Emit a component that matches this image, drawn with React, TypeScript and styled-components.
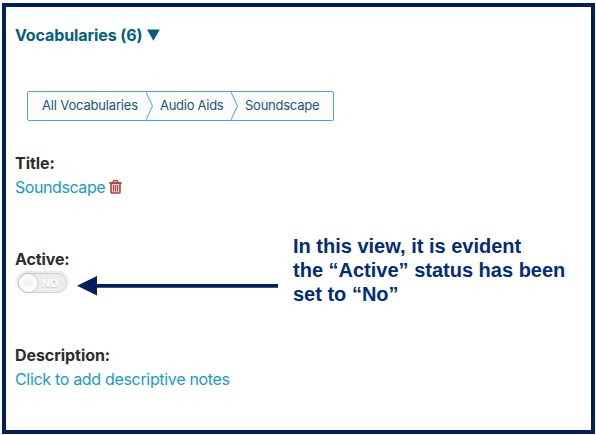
import React from "react";
import styled, { createGlobalStyle } from "styled-components";

const GlobalStyle = createGlobalStyle`
  *, *::before, *::after { box-sizing: border-box; }
  body { margin: 0; background: #fff; overflow: hidden; }
`;

const Page = styled.div`
  width: 596px;
  height: 435px;
  padding: 3px 1px 1px 2px;
  background: #fff;
  font: 16px/24px Inter, "Liberation Sans", sans-serif;
`;

const Frame = styled.main`
  position: relative;
  width: 593px;
  height: 431px;
  border: 4px solid #001f5b;
  padding: 16px 10px 0 9px;
`;

const SectionToggle = styled.h2`
  display: flex;
  align-items: center;
  gap: 4.5px;
  height: 24px;
  margin: 0 0 44px;
  color: #00607f;
  font-size: 16px;
  line-height: 24px;
  font-weight: 700;
  white-space: nowrap;
`;

const Fit = styled.span<{ $spacing: number }>`
  letter-spacing: ${(p) => p.$spacing}px;
  white-space: nowrap;
`;

const Trail = styled.nav`
  display: flex;
  width: 307px;
  height: 30px;
  margin: 0 0 30px 12px;
  border: 1px solid #48a7d3;
  border-radius: 2px;
  background: #fbfbfb;
`;

const Crumb = styled.a<{ $width: number; $spacing: number }>`
  width: ${(p) => p.$width}px;
  flex: none;
  padding-left: 14px;
  color: #1a5775;
  font-size: 13px;
  line-height: 27px;
  letter-spacing: ${(p) => p.$spacing}px;
  white-space: nowrap;
`;

const Chevron = styled.svg`
  flex: none;
  width: 8px;
  height: 28px;
  margin-right: -8px;
`;

const Field = styled.section`
  height: 96px;
`;

const Label = styled.div`
  height: 24px;
  color: #2d2d2d;
  font-weight: 700;
`;

const Value = styled.div`
  display: flex;
  align-items: center;
  gap: 4px;
  height: 24px;
  color: #189acb;
`;

const Switch = styled.button`
  display: flex;
  align-items: center;
  width: 55px;
  height: 24px;
  margin: 0;
  padding: 3px;
  border: 0;
  border-radius: 12px;
  background: linear-gradient(#ebebeb, #fff);
`;

const Track = styled.span`
  display: flex;
  align-items: center;
  width: 49px;
  height: 20px;
  flex: none;
  border: 1px solid #cecece;
  border-radius: 10px;
  background: #ededed;
  color: #fff;
  font: 700 11px/18px "Liberation Sans", sans-serif;
  letter-spacing: -0.2px;
  text-shadow: 0 1px 1px rgba(0, 0, 0, 0.16);
`;

const Knob = styled.span`
  width: 18px;
  height: 18px;
  margin: 0 5px 0 0;
  flex: none;
  border-radius: 50%;
  background: radial-gradient(circle, #f3f3f3 0 4px, #fff 6px);
  box-shadow: 0 0 3px rgba(0, 0, 0, 0.25);
`;

const Callout = styled.aside`
  position: absolute;
  left: 71px;
  top: 227px;
  display: flex;
  align-items: flex-start;
`;

const Arrow = styled.svg`
  width: 202px;
  height: 20px;
  margin-top: 42px;
  flex: none;
`;

const Note = styled.p`
  margin: 0 0 0 14px;
  color: #002d7a;
  font: 700 20px/24px "Liberation Sans", sans-serif;
  white-space: nowrap;
`;

const NoteLine = styled.span`
  display: block;
`;

const Divider = () => (
  <Chevron viewBox="0 0 8 28" fill="none" stroke="#70b9dc" strokeWidth="1.2">
    <path d="M0 0L6.5 14L0 28" />
  </Chevron>
);

const TrashIcon = () => (
  <svg width="13" height="14" viewBox="0 0 13 14" fill="none" stroke="#ad4540">
    <path d="M2 3H11V12.2Q11 13 10 13H3Q2 13 2 12.2Z" fill="#efd5d3" strokeWidth="1.6" />
    <path d="M.3 3H12.7" strokeWidth="1.8" />
    <path d="M4.2 2.5V1.4Q4.2 .7 4.9 .7H8.1Q8.8 .7 8.8 1.4V2.5" strokeWidth="1.3" />
    <path d="M4.5 5V11.5M6.5 5V11.5M8.5 5V11.5" strokeWidth="1.1" />
  </svg>
);

export default function App() {
  return (
    <Page>
      <GlobalStyle />
      <Frame>
        <SectionToggle>
          <Fit $spacing={-0.1}>Vocabularies (6)</Fit>
          <svg width="13" height="12" viewBox="0 0 13 12" fill="#00607f">
            <path d="M0 .5H12.8L6.4 11.8Z" />
          </svg>
        </SectionToggle>
        <Trail>
          <Crumb $width={118} $spacing={-0.17}>All Vocabularies</Crumb>
          <Divider />
          <Crumb $width={85} $spacing={-0.28}>Audio Aids</Crumb>
          <Divider />
          <Crumb $width={90} $spacing={-0.25}>Soundscape</Crumb>
        </Trail>
        <Field>
          <Label><Fit $spacing={-0.05}>Title:</Fit></Label>
          <Value><Fit $spacing={-0.42}>Soundscape</Fit><TrashIcon /></Value>
        </Field>
        <Field>
          <Label><Fit $spacing={-0.12}>Active:</Fit></Label>
          <Switch aria-label="Active">
            <Track><Knob />NO</Track>
          </Switch>
        </Field>
        <Field>
          <Label><Fit $spacing={-0.06}>Description:</Fit></Label>
          <Value><Fit $spacing={-0.32}>Click to add descriptive notes</Fit></Value>
        </Field>
        <Callout>
          <Arrow viewBox="0 0 202 20" fill="#001f5b">
            <path d="M0 9.8L20 0V8H201V11.7H20V19.6Z" />
          </Arrow>
          <Note>
            <NoteLine>In this view, it is evident</NoteLine>
            <NoteLine>the “Active” status has been</NoteLine>
            <NoteLine>set to “No”</NoteLine>
          </Note>
        </Callout>
      </Frame>
    </Page>
  );
}
